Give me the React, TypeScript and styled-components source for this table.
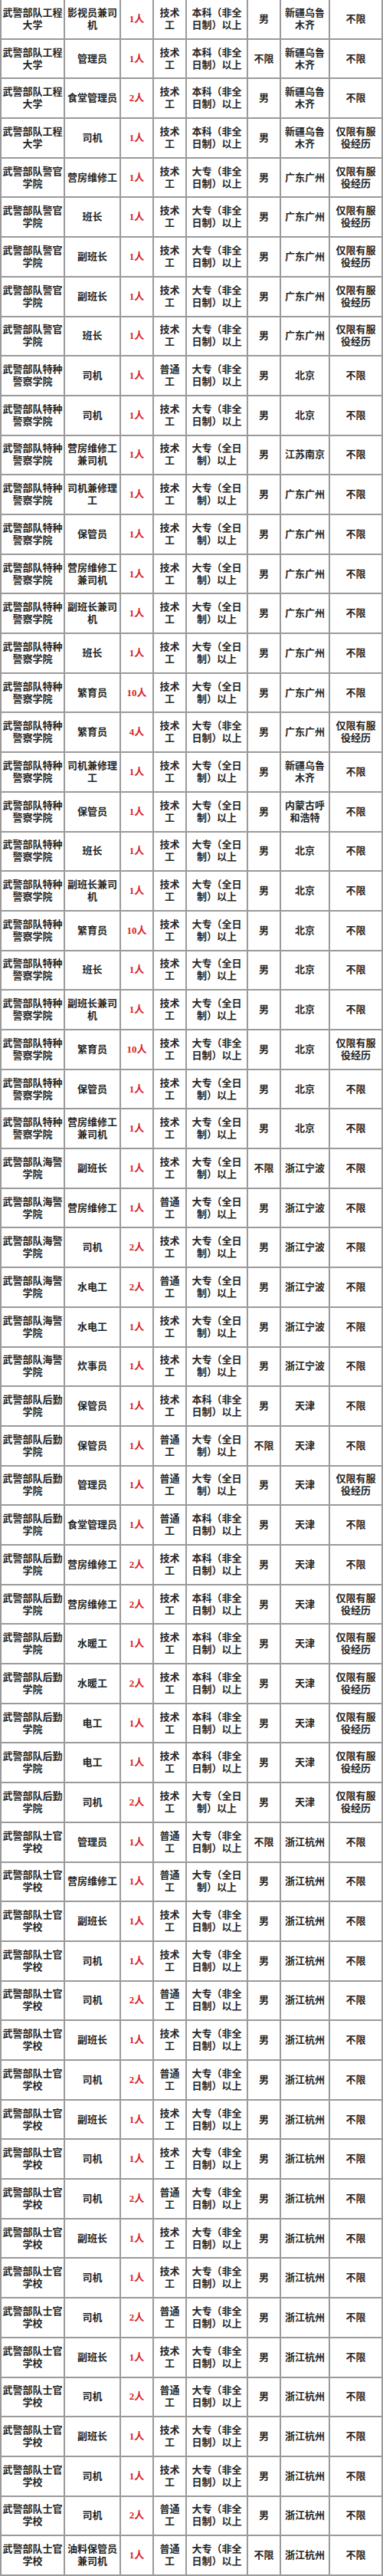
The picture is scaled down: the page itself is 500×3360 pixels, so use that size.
import styled, { createGlobalStyle } from 'styled-components'

const GlobalStyle = createGlobalStyle`
    html, body {
        margin: 0;
        padding: 0;
        background: #ffffff;
    }
`

// units
const GC = '武警部队工程\n大学'
const JG = '武警部队警官\n学院'
const TZ = '武警部队特种\n警察学院'
const HJ = '武警部队海警\n学院'
const HQ = '武警部队后勤\n学院'
const SG = '武警部队士官\n学校'

// worker type
const JS = '技术\n工'
const PT = '普通\n工'

// education
const BK = '本科（非全\n日制）以上'
const DZF = '大专（非全\n日制）以上'
const DZQ = '大专（全日\n制）以上'

// places
const XJ = '新疆乌鲁\n木齐'
const GZ = '广东广州'
const BJ = '北京'
const NB = '浙江宁波'
const TJ = '天津'
const HZ = '浙江杭州'

// notes
const BX = '不限'
const YF = '仅限有服\n役经历'

type Row = [string, string, string, string, string, string, string, string]

const rows: Row[] = [
    [GC, '影视员兼司\n机', '1人', JS, BK, '男', XJ, BX],
    [GC, '管理员', '1人', JS, BK, '不限', XJ, BX],
    [GC, '食堂管理员', '2人', JS, BK, '男', XJ, BX],
    [GC, '司机', '1人', JS, BK, '男', XJ, YF],
    [JG, '营房维修工', '1人', JS, DZF, '男', GZ, YF],
    [JG, '班长', '1人', JS, DZF, '男', GZ, YF],
    [JG, '副班长', '1人', JS, DZF, '男', GZ, YF],
    [JG, '副班长', '1人', JS, DZF, '男', GZ, YF],
    [JG, '班长', '1人', JS, DZF, '男', GZ, YF],
    [TZ, '司机', '1人', PT, DZF, '男', BJ, BX],
    [TZ, '司机', '1人', JS, DZF, '男', BJ, BX],
    [TZ, '营房维修工\n兼司机', '1人', JS, DZQ, '男', '江苏南京', BX],
    [TZ, '司机兼修理\n工', '1人', JS, DZQ, '男', GZ, BX],
    [TZ, '保管员', '1人', JS, DZQ, '男', GZ, BX],
    [TZ, '营房维修工\n兼司机', '1人', JS, DZQ, '男', GZ, BX],
    [TZ, '副班长兼司\n机', '1人', JS, DZQ, '男', GZ, BX],
    [TZ, '班长', '1人', JS, DZQ, '男', GZ, BX],
    [TZ, '繁育员', '10人', JS, DZQ, '男', GZ, BX],
    [TZ, '繁育员', '4人', JS, DZF, '男', GZ, YF],
    [TZ, '司机兼修理\n工', '1人', JS, DZQ, '男', XJ, BX],
    [TZ, '保管员', '1人', JS, DZQ, '男', '内蒙古呼\n和浩特', BX],
    [TZ, '班长', '1人', JS, DZQ, '男', BJ, BX],
    [TZ, '副班长兼司\n机', '1人', JS, DZQ, '男', BJ, BX],
    [TZ, '繁育员', '10人', JS, DZQ, '男', BJ, BX],
    [TZ, '班长', '1人', JS, DZQ, '男', BJ, BX],
    [TZ, '副班长兼司\n机', '1人', JS, DZQ, '男', BJ, BX],
    [TZ, '繁育员', '10人', JS, DZF, '男', BJ, YF],
    [TZ, '保管员', '1人', JS, DZQ, '男', BJ, BX],
    [TZ, '营房维修工\n兼司机', '1人', JS, DZQ, '男', BJ, BX],
    [HJ, '副班长', '1人', JS, DZQ, '不限', NB, BX],
    [HJ, '营房维修工', '1人', PT, DZQ, '男', NB, BX],
    [HJ, '司机', '2人', JS, DZQ, '男', NB, BX],
    [HJ, '水电工', '2人', PT, DZQ, '男', NB, BX],
    [HJ, '水电工', '1人', JS, DZQ, '男', NB, BX],
    [HJ, '炊事员', '1人', JS, DZQ, '男', NB, BX],
    [HQ, '保管员', '1人', JS, BK, '男', TJ, BX],
    [HQ, '保管员', '1人', PT, DZQ, '不限', TJ, BX],
    [HQ, '管理员', '1人', PT, DZQ, '男', TJ, YF],
    [HQ, '食堂管理员', '1人', PT, BK, '男', TJ, BX],
    [HQ, '营房维修工', '2人', JS, BK, '男', TJ, BX],
    [HQ, '营房维修工', '2人', JS, BK, '男', TJ, YF],
    [HQ, '水暖工', '1人', JS, BK, '男', TJ, YF],
    [HQ, '水暖工', '2人', JS, BK, '男', TJ, YF],
    [HQ, '电工', '1人', JS, BK, '男', TJ, YF],
    [HQ, '电工', '1人', JS, BK, '男', TJ, YF],
    [HQ, '司机', '2人', JS, DZQ, '男', TJ, YF],
    [SG, '管理员', '1人', PT, DZF, '不限', HZ, BX],
    [SG, '营房维修工', '1人', PT, DZQ, '男', HZ, BX],
    [SG, '副班长', '1人', JS, DZF, '男', HZ, BX],
    [SG, '司机', '1人', JS, DZF, '男', HZ, BX],
    [SG, '司机', '2人', PT, DZF, '男', HZ, BX],
    [SG, '副班长', '1人', JS, DZF, '男', HZ, BX],
    [SG, '司机', '2人', PT, DZF, '男', HZ, BX],
    [SG, '副班长', '1人', JS, DZF, '男', HZ, BX],
    [SG, '司机', '1人', JS, DZF, '男', HZ, BX],
    [SG, '司机', '2人', PT, DZF, '男', HZ, BX],
    [SG, '副班长', '1人', JS, DZF, '男', HZ, BX],
    [SG, '司机', '1人', JS, DZF, '男', HZ, BX],
    [SG, '司机', '2人', PT, DZF, '男', HZ, BX],
    [SG, '副班长', '1人', JS, DZF, '男', HZ, BX],
    [SG, '司机', '2人', PT, DZF, '男', HZ, BX],
    [SG, '副班长', '1人', JS, DZF, '男', HZ, BX],
    [SG, '司机', '1人', JS, DZF, '男', HZ, BX],
    [SG, '司机', '2人', PT, DZF, '男', HZ, BX],
    [SG, '油料保管员\n兼司机', '1人', PT, DZF, '不限', HZ, BX],
]

export default function App() {
    return (
        <>
            <GlobalStyle />
            <Table $rows={rows.length}>
                {rows.map((row, i) =>
                    row.map((text, j) => (
                        <Cell key={`${i}-${j}`} $red={j === 2}>
                            {text}
                        </Cell>
                    ))
                )}
            </Table>
        </>
    )
}

const Table = styled.div<{ $rows: number }>`
    display: grid;
    grid-template-columns: 83px 73px 43px 43px 80px 43px 64px 69px;
    grid-template-rows: repeat(${p => p.$rows}, 1fr);
    width: 500px;
    height: 3360px;
    box-sizing: border-box;
    border-left: 2px solid #9a9a9a;
    background: #ffffff;
`

const Cell = styled.div<{ $red?: boolean }>`
    display: flex;
    align-items: center;
    justify-content: center;
    box-sizing: border-box;
    border-right: 2px solid #9a9a9a;
    border-bottom: 2px solid #9a9a9a;
    white-space: pre;
    text-align: center;
    overflow: hidden;
    font-family: 'Liberation Serif', 'Noto Sans CJK SC', serif;
    font-size: 13px;
    line-height: 16px;
    font-weight: 700;
    color: ${p => (p.$red ? '#d8262c' : '#262626')};
    letter-spacing: 0;
`
